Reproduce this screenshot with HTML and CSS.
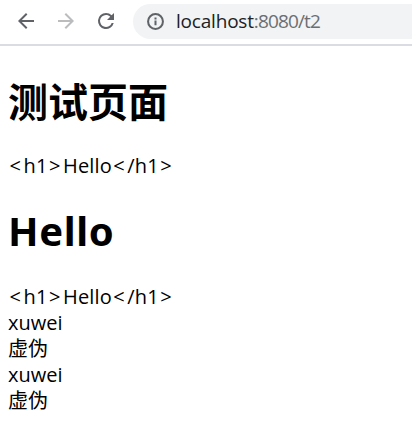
FILE: index.html
```
<!DOCTYPE html>
<html lang="zh">
<head>
<meta charset="utf-8">
<title>测试页面</title>
<link rel="stylesheet" href="styles.css">
</head>
<body>
<header class="toolbar">
  <svg class="icon" viewBox="0 0 24 24"><path d="M20 11H7.83l5.59-5.59L12 4l-8 8 8 8 1.41-1.41L7.83 13H20z"/></svg>
  <svg class="icon disabled" viewBox="0 0 24 24"><path d="M12 4l-1.41 1.41L16.17 11H4v2h12.17l-5.58 5.59L12 20l8-8z"/></svg>
  <svg class="icon" viewBox="0 0 24 24"><path d="M17.65 6.35A7.96 7.96 0 0 0 12 4a8 8 0 1 0 7.73 10h-2.08A6 6 0 1 1 12 6c1.66 0 3.14.69 4.22 1.78L13 11h7V4z"/></svg>
  <div class="address">
    <svg class="info" viewBox="0 0 16 16"><circle cx="8" cy="8" r="7"/><path d="M8 7v4.6M8 4.2v1.8"/></svg>
    <span class="url"><span class="host">localhost</span>:8080/t2</span>
  </div>
</header>
<main class="page">
  <h1 class="cjk-title">测试页面</h1>
  <div class="code"><span class="angle">&lt;</span>h1<span class="angle">&gt;</span>Hello<span class="angle">&lt;</span>/h1<span class="angle">&gt;</span></div>
  <h1 class="hello">Hello</h1>
  <div class="code"><span class="angle">&lt;</span>h1<span class="angle">&gt;</span>Hello<span class="angle">&lt;</span>/h1<span class="angle">&gt;</span></div>
  <div class="name">xuwei</div>
  <div class="cjk">虚伪</div>
  <div class="name">xuwei</div>
  <div class="cjk">虚伪</div>
</main>
</body>
</html>
```
FILE: styles.css
```
body {
  margin: 0;
  background: #fff;
  color: #000;
  font-family: "Open Sans", "Noto Sans CJK SC", sans-serif;
}

.toolbar {
  display: flex;
  align-items: center;
  box-sizing: border-box;
  height: 46px;
  padding: 0 0 2px 14px;
  border-bottom: 2px solid #dadce3;
}

.icon {
  flex: none;
  width: 24px;
  height: 24px;
  margin-right: 16px;
  fill: #5f6368;
}

.disabled {
  fill: #babcbe;
}

.address {
  display: flex;
  flex: 1;
  align-items: center;
  height: 35px;
  margin-left: -1px;
  padding-left: 14px;
  border-radius: 18px 0 0 18px;
  background: #f1f3f4;
}

.info {
  width: 17px;
  height: 17px;
  margin-right: 12px;
  fill: none;
  stroke: #5f6368;
  stroke-width: 1.9;
}

.url {
  color: #6b6f73;
  font-size: 19px;
  line-height: 26px;
  letter-spacing: -0.85px;
}

.host {
  color: #202124;
  letter-spacing: -0.2px;
}

.page {
  padding: 30px 8px 0;
  font-size: 20px;
  line-height: 26px;
}

h1 {
  margin: 0;
  font-size: 40px;
  line-height: 52px;
}

.cjk-title {
  margin-bottom: 25px;
}

.hello {
  margin: 26px 0 27px;
  font-family: "Noto Sans", sans-serif;
  letter-spacing: 0.6px;
}

.code {
  letter-spacing: 0.15px;
}

.angle {
  padding: 0 2.4px 0 1.5px;
}
```
